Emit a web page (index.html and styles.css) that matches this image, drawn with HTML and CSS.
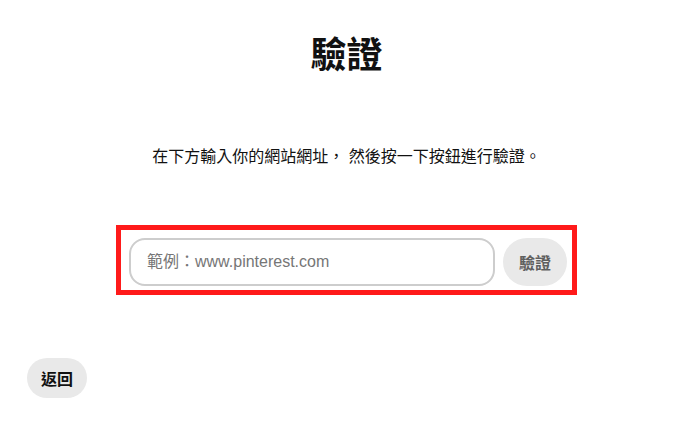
FILE: index.html
```html
<!DOCTYPE html>
<html lang="zh-Hant">
<head>
    <meta charset="UTF-8">
    <meta name="viewport" content="width=device-width, initial-scale=1.0">
    <title>驗證</title>
    <link rel="stylesheet" href="styles.css">
</head>
<body>
    <main class="verify-page">
        <h1 class="verify-title">驗證</h1>
        <p class="verify-desc">在下方輸入你的網站網址， 然後按一下按鈕進行驗證。</p>

        <div class="verify-box">
            <form class="verify-form" onsubmit="return false;">
                <input type="text" class="site-input" placeholder="範例：www.pinterest.com">
                <button type="submit" class="gray-button verify-button">驗證</button>
            </form>
        </div>

        <div class="back-row">
            <button type="button" class="gray-button back-button">返回</button>
        </div>
    </main>
</body>
</html>
```

FILE: styles.css
```css
* {
    margin: 0;
    padding: 0;
    box-sizing: border-box;
    font-family: "Liberation Sans", "Noto Sans CJK JP", sans-serif;
}
body {
    background-color: #fff;
    color: #111;
}
.verify-page {
    display: flex;
    flex-direction: column;
    align-items: center;
    padding: 34px 4px 0 0;
}
.verify-title {
    font-size: 36px;
    line-height: 44px;
    font-weight: 700;
    color: #111;
}
.verify-desc {
    margin-top: 67px;
    font-size: 16px;
    line-height: 24px;
}
.verify-box {
    margin-top: 56px;
    width: 461px;
    border: 5px solid #ff1a1a;
    padding: 8px 5px 4px 8px;
}
.verify-form {
    display: flex;
    align-items: center;
    gap: 8px;
}
.site-input {
    flex: 1;
    height: 48px;
    border: 2px solid #cdcdcd;
    border-radius: 16px;
    padding: 0 16px;
    font-size: 16px;
    color: #111;
    outline: none;
}
.site-input::placeholder {
    color: #767676;
}
.gray-button {
    background-color: #e9e9e9;
    border: none;
    font-weight: 700;
    font-size: 16px;
    cursor: pointer;
}
.verify-button {
    height: 48px;
    padding: 0 16px;
    border-radius: 24px;
    color: #5f5f5f;
}
.back-row {
    align-self: stretch;
    margin-top: 63px;
    padding-left: 27px;
}
.back-button {
    height: 40px;
    padding: 0 14px;
    border-radius: 20px;
    color: #111;
}
```
